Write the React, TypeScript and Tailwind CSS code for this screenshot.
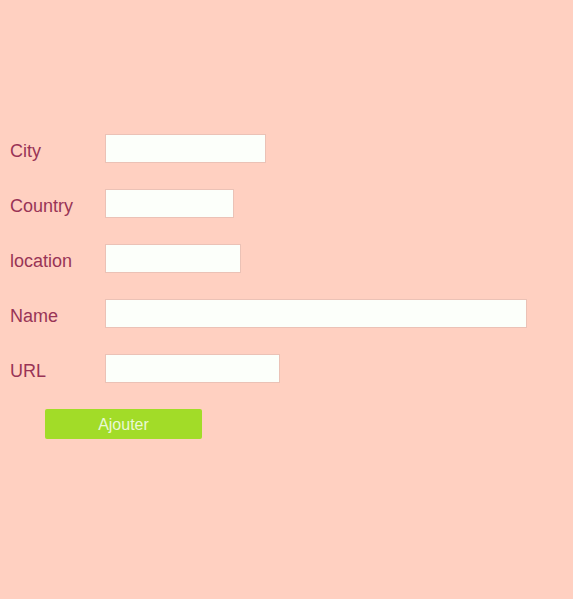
import React, { useState } from 'react';

const fields = [
  { label: 'City', width: 'w-[161px]' },
  { label: 'Country', width: 'w-[129px]' },
  { label: 'location', width: 'w-[136px]' },
  { label: 'Name', width: 'w-[422px]' },
  { label: 'URL', width: 'w-[175px]' },
];

const App: React.FC = () => {
  const [values, setValues] = useState<Record<string, string>>({});

  return (
    <div
      className="min-h-[599px] w-full bg-[#ffd0c1] pt-[121px]"
      style={{ fontFamily: '"Liberation Sans", Arial, sans-serif' }}
    >
      <form onSubmit={(e) => e.preventDefault()}>
        {fields.map((f) => (
          <div key={f.label} className="flex h-[55px] items-center">
            <label className="w-[105px] pl-[10px] pt-[6px] text-[18px] text-[#993456]">
              {f.label}
            </label>
            <input
              type="text"
              value={values[f.label] ?? ''}
              onChange={(e) => setValues({ ...values, [f.label]: e.target.value })}
              className={`${f.width} h-[29px] border border-[#ebc2b6] bg-[#fcfffa] px-1 text-[14px] outline-none`}
            />
          </div>
        ))}
        <button
          type="submit"
          className="ml-[45px] mt-[13px] h-[30px] w-[157px] rounded-[2px] bg-[#a2dc28] pt-[1px] text-[16px] text-[#eaf8d6]"
        >
          Ajouter
        </button>
      </form>
    </div>
  );
};

export default App;
